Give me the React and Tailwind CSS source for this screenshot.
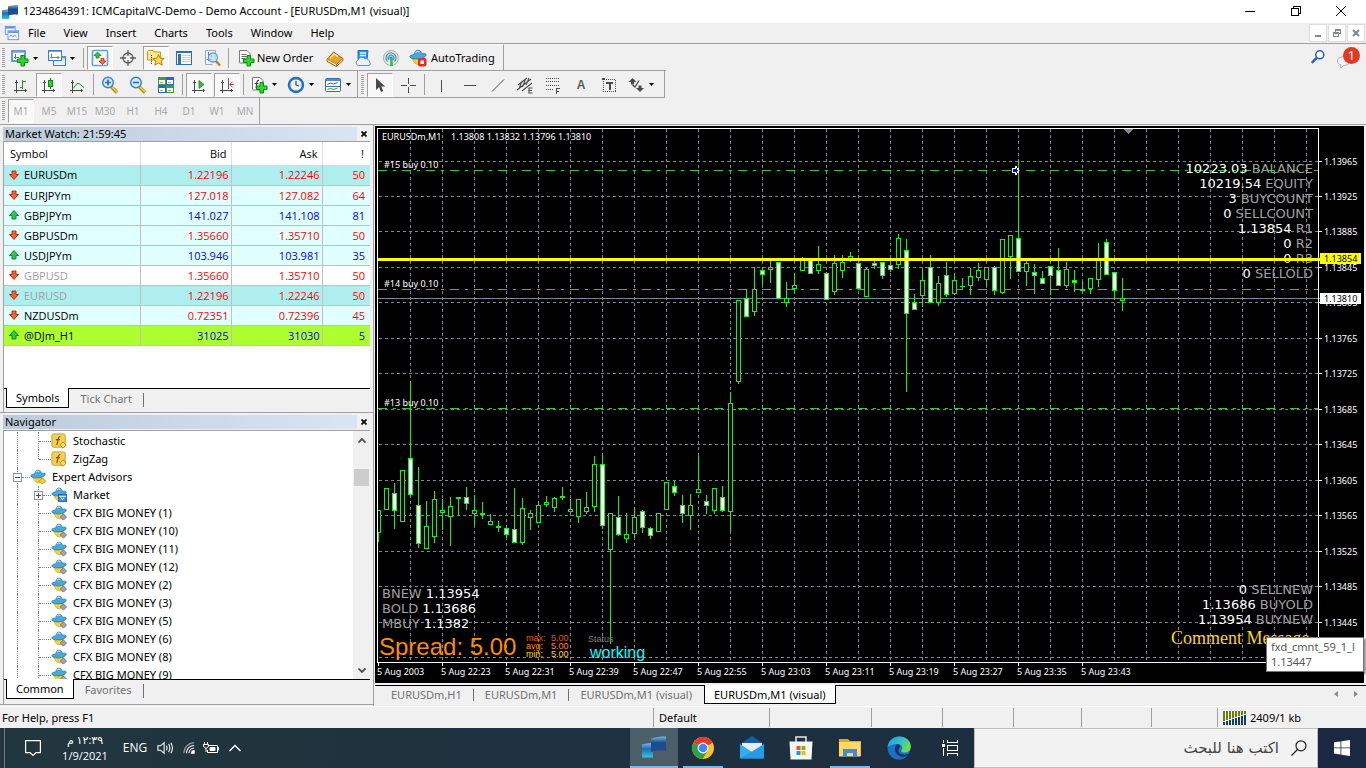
import React from 'react';

/* ---------- chart data: [high, low, bodyTop, bodyBottom, filled] ---------- */
const CANDLES = [
  [510, 541, 510, 532, 0], [488, 509, 488, 509, 0], [483, 528, 493, 510, 1], [470, 521, 470, 521, 0],
  [381, 496, 458, 494, 1], [467, 547, 505, 543, 1], [501, 548, 526, 548, 0], [491, 542, 499, 536, 0],
  [499, 529, 510, 512, 0], [497, 545, 506, 516, 0], [497, 515, 497, 498, 0], [487, 509, 497, 503, 1],
  [495, 524, 510, 513, 0], [502, 518, 513, 514, 0], [514, 524, 521, 524, 0], [521, 531, 526, 527, 0],
  [527, 537, 528, 534, 1], [488, 542, 529, 542, 1], [498, 544, 508, 542, 0], [510, 529, 513, 517, 0],
  [503, 522, 505, 522, 0], [496, 506, 502, 504, 0], [497, 511, 498, 507, 0], [487, 499, 496, 497, 0],
  [499, 512, 509, 511, 0], [499, 522, 499, 516, 0], [492, 513, 507, 511, 0], [456, 511, 464, 506, 0],
  [455, 528, 464, 525, 1], [513, 643, 513, 549, 0], [496, 535, 517, 534, 1], [513, 542, 534, 538, 0],
  [507, 536, 517, 533, 0], [510, 532, 511, 527, 1], [527, 538, 528, 535, 1], [513, 531, 513, 531, 0],
  [482, 509, 482, 509, 0], [480, 495, 486, 492, 1], [495, 522, 505, 513, 1], [494, 529, 505, 515, 0],
  [456, 492, 489, 492, 0], [495, 513, 501, 505, 1], [488, 513, 488, 510, 0], [486, 511, 497, 510, 1],
  [392, 531, 403, 511, 0], [300, 383, 300, 381, 0], [289, 316, 298, 316, 1], [267, 315, 289, 311, 0],
  [267, 284, 270, 274, 1], [260, 282, 267, 269, 0], [262, 298, 262, 298, 1], [282, 306, 298, 302, 0],
  [273, 292, 285, 288, 0], [257, 270, 259, 270, 0], [260, 273, 260, 273, 1], [246, 273, 264, 270, 0],
  [272, 299, 273, 299, 1], [255, 294, 263, 291, 0], [255, 277, 262, 270, 0], [252, 261, 256, 258, 0],
  [260, 288, 263, 288, 1], [267, 296, 269, 296, 0], [261, 268, 263, 265, 1], [262, 278, 262, 275, 1],
  [262, 271, 265, 269, 1], [234, 268, 238, 264, 0], [239, 391, 250, 313, 1], [294, 309, 302, 309, 1],
  [270, 306, 280, 295, 0], [255, 302, 267, 302, 1], [276, 305, 283, 302, 0], [262, 296, 275, 294, 1],
  [273, 294, 280, 293, 0], [278, 289, 286, 286, 0], [268, 294, 276, 285, 0], [263, 280, 270, 277, 0],
  [267, 285, 267, 279, 0], [266, 294, 267, 290, 1], [239, 293, 239, 292, 0], [235, 278, 235, 256, 0],
  [160, 271, 238, 271, 1], [260, 285, 263, 271, 0], [264, 293, 272, 275, 1], [271, 283, 278, 283, 1],
  [266, 294, 266, 275, 1], [248, 285, 270, 285, 1], [262, 287, 269, 285, 0], [270, 291, 280, 282, 1],
  [281, 290, 289, 290, 0], [278, 293, 278, 288, 0], [243, 286, 259, 279, 0], [239, 274, 242, 274, 1],
  [272, 299, 272, 290, 1], [278, 310, 298, 300, 0],
];
const GRID_Y = [161, 196, 231, 267, 302, 338, 373, 409, 444, 480, 515, 551, 586, 622, 657];
const PRICES = ['1.13965', '1.13925', '1.13885', '1.13845', '1.13805', '1.13765', '1.13725', '1.13685', '1.13645', '1.13605', '1.13565', '1.13525', '1.13485', '1.13445'];
const TIMES = ['5 Aug 2003', '5 Aug 22:23', '5 Aug 22:31', '5 Aug 22:39', '5 Aug 22:47', '5 Aug 22:55', '5 Aug 23:03', '5 Aug 23:11', '5 Aug 23:19', '5 Aug 23:27', '5 Aug 23:35', '5 Aug 23:43'];
const ORDERS = [[170, '#15 buy 0.10'], [289, '#14 buy 0.10'], [408, '#13 buy 0.10']];
const STATS_TOP = [['10223.03', 'BALANCE'], ['10219.54', 'EQUITY'], ['3', 'BUYCOUNT'], ['0', 'SELLCOUNT'], ['1.13854', 'R1'], ['0', 'R2'], ['0', 'R3'], ['0', 'SELLOLD']];
const STATS_BOTTOM = [['0', 'SELLNEW'], ['1.13686', 'BUYOLD'], ['1.13954', 'BUYNEW']];
const STATS_LEFT = [['BNEW', '1.13954'], ['BOLD', '1.13686'], ['MBUY', '1.1382']];
const SPREADS = [['max:', '5.00', '#ff4500', 641], ['avg:', '5.00', '#ff8c00', 649], ['min:', '5.00', '#ffd700', 657]];

const UI = "font-['Noto_Sans','Open_Sans',sans-serif]";
const VERD = "font-['DejaVu_Sans',sans-serif] text-[13px]";
const ARIAL = "font-['Liberation_Sans',sans-serif]";

function Stat({ y, value, label }) {
  return (
    <text x="1313" y={y} textAnchor="end" className={VERD} fill="#fff">
      {value} <tspan fill="#a0a0a0">{label}</tspan>
    </text>
  );
}

function Chart() {
  const cols = Array.from({ length: 29 }, (_, i) => 410 + i * 32);
  return (
    <svg viewBox="375 126 989 557" className={`absolute inset-0 h-full w-full ${UI} text-[9px]`} role="img" aria-label="EURUSDm M1 candlestick chart">
      <g shapeRendering="crispEdges" stroke="#778899" strokeDasharray="3 3">
        {cols.map((x) => <path key={x} d={`M${x + 0.5} 129V662`} />)}
        {GRID_Y.map((y) => <path key={y} d={`M379 ${y + 0.5}H1318`} />)}
      </g>
      <g shapeRendering="crispEdges">
        {ORDERS.map(([y]) => <path key={y} d={`M378 ${y + 0.5}H1318`} stroke="#32cd32" strokeDasharray="9 6 3 6" />)}
        <path d="M378 298.5H1321" stroke="#778899" />
        <clipPath id="plot"><rect x="378" y="129" width="940" height="533" /></clipPath>
        <g clipPath="url(#plot)" stroke="#00ff00">
          {CANDLES.map(([h, l, t, b, f], i) => {
            const x = 378 + i * 8;
            return (
              <g key={x}>
                <path d={`M${x + 0.5} ${h}V${l + 1}`} />
                {b - t < 2
                  ? <rect x={x - 2} y={t} width="5" height={b - t + 1} fill="#00ff00" stroke="none" />
                  : <rect x={x - 1.5} y={t + 0.5} width="4" height={b - t} fill={f ? '#fff' : '#000'} />}
              </g>
            );
          })}
        </g>
        <path d="M1124 129h9l-4.500 5z" fill="#778899" />
        <path d="M1012 168h3v-2h2v2h2v5h-2v2h-2v-2h-3z" fill="#fff" />
        <path d="M1013 169h3v-1h1v2h1v1h-1v2h-1v-1h-3z" fill="#00f" />
      </g>
      <g fill="#fff">
        <text x="382" y="140">EURUSDm,M1</text>
        <text x="451" y="140">1.13808 1.13832 1.13796 1.13810</text>
        {ORDERS.map(([y, label]) => <text key={y} x="384" y={y - 2}>{label}</text>)}
        {PRICES.map((p, i) => <text key={p} x="1324" y={GRID_Y[i] + 4}>{p}</text>)}
        {TIMES.map((t, i) => <text key={t} x={377 + i * 64} y="675">{t}</text>)}
      </g>
      {STATS_TOP.map(([v, l], i) => <Stat key={l} y={173 + i * 15} value={v} label={l} />)}
      {STATS_BOTTOM.map(([v, l], i) => <Stat key={l} y={594 + i * 15} value={v} label={l} />)}
      {STATS_LEFT.map(([l, v], i) => (
        <text key={l} x="382" y={598 + i * 15} className={VERD} fill="#a0a0a0">{l} <tspan fill="#fff">{v}</tspan></text>
      ))}
      <g className={ARIAL}>
        <text x="379" y="655" className="text-[24px]" fill="#ff8c00">Spread: 5.00</text>
        {SPREADS.map(([l, v, c, y]) => (
          <g key={l} fill={c} className="text-[9px]"><text x="526" y={y}>{l}</text><text x="551" y={y}>{v}</text></g>
        ))}
        <text x="588" y="642" className="text-[9px]" fill="#808080">Status</text>
        <text x="590" y="658" className="text-[16px]" fill="#00ffff">working</text>
      </g>
      <text x="1171" y="644" className="font-['Liberation_Serif',serif] text-[18px]" fill="#ffd700">Comment Message</text>
      <g shapeRendering="crispEdges">
        <rect x="378" y="258" width="942" height="3" fill="#ff0" />
        <path d="M377.500 662V128.500H1318.500V662.500H377" fill="none" stroke="#fff" />
        {GRID_Y.slice(0, 14).map((y) => <path key={y} d={`M1319 ${y + 0.5}h3`} stroke="#fff" />)}
        {TIMES.map((t, i) => <path key={t} d={`M${378.5 + i * 64} 663v3`} stroke="#fff" />)}
        <rect x="1320" y="253" width="41" height="11" fill="#ff0" />
        <rect x="1320" y="293" width="41" height="11" fill="#fff" />
      </g>
      <text x="1324" y="262" fill="#000">1.13854</text>
      <text x="1324" y="302" fill="#000">1.13810</text>
    </svg>
  );
}

/* ------------------------------- icons ------------------------------- */
function Ico({ children, s = 'h-[18px] w-[18px]', crisp }) {
  return <svg viewBox="0 0 18 18" className={`${s} shrink-0`} fill="none" shapeRendering={crisp ? 'crispEdges' : undefined} aria-hidden="true">{children}</svg>;
}
const Plus = ({ x = 6, y = 6 }) => (
  <path transform={`translate(${x} ${y})`} d="M4 .5h3.500v3.500h3.500v3.500h-3.500v3.500h-3.500v-3.500h-3.500v-3.500h3.500z" fill="#2fd62f" stroke="#0b8a17" />
);
const Axes = ({ children }) => (
  <Ico crisp>
    <path d="M4.500 4V17M2 14.500H15M3 6.500h3M13.500 13v3" stroke="#4a4a4a" />
    <g transform="translate(0 1)">{children}</g>
  </Ico>
);
const NewChartI = () => <Ico><rect x="1" y="2" width="13" height="10" fill="#fff" stroke="#3b7fc4" strokeWidth="1.500" /><path d="M2 3.500h12" stroke="#8fbdea" /><path d="M4.500 5v5M3 8.500h5M10 6v3" stroke="#5c7f9e" /><Plus /></Ico>;
const ProfilesI = () => <Ico><rect x="5.500" y="7.500" width="12" height="9" fill="#e4f0fb" stroke="#3b7fc4" /><path d="M6 8.500h11" stroke="#6aa5dd" strokeWidth="2" /><rect x=".5" y="1.500" width="13" height="10" fill="#fff" stroke="#3b7fc4" /><path d="M1 2.500h12" stroke="#6aa5dd" /><path d="M3.500 4.500v5M2.500 8.500h9M10 7v3" stroke="#5c7f9e" /></Ico>;
const WatchI = () => <Ico><rect x="1.500" y="1.500" width="15" height="15" rx="1" fill="#fff" stroke="#5ea0dc" strokeWidth="1.600" /><path d="M6.500 3l3.500 3.500H8v2.500H5V6.500H3z" fill="#2ecc40" stroke="#0b8a17" strokeWidth=".8" /><path d="M11.500 15.500L8 12h2V9.500h3V12h2z" fill="#ff6a3c" stroke="#c22e06" strokeWidth=".8" /></Ico>;
const TargetI = () => <Ico><circle cx="9" cy="9" r="5" stroke="#5c5c5c" strokeWidth="1.300" /><path d="M9 1v6M9 11v6M1 9h6M11 9h6" stroke="#5c5c5c" strokeWidth="1.300" /></Ico>;
const Star = 'M11.500 5.500l1.700 3.700 4 .3-3 2.700 1 4-3.700-2.200-3.700 2.200 1-4-3-2.700 4-.3z';
const NavI = () => <Ico><path d="M.5 11V2.500l1-1H6l1.500 1.500H13.500V11z" fill="#fbe98c" stroke="#c79a1a" /><path d="M4.500 6v10" stroke="#333" strokeDasharray="1 1" /><path d={Star} fill="#ffd84a" stroke="#b8860b" /></Ico>;
const TermI = () => <Ico crisp><rect x="1.500" y="2.500" width="15" height="13" fill="#fff" stroke="#2f6fb5" /><path d="M2 3.500h14" stroke="#2f6fb5" /><path d="M4 5v10" stroke="#2f6fb5" strokeWidth="3" /><path d="M7 6.500h9M7 8.500h9M7 10.500h9M7 12.500h9" stroke="#b9d4ee" /></Ico>;
const TesterI = () => <Ico><path d="M2.500 15.500v-14h10v9M2.500 15.500h7" fill="#eef5fc" stroke="#9aaabb" /><path d="M5.500 3v9M3.500 10.500h6M8.500 4v4" stroke="#5c8fbe" /><circle cx="10" cy="8.500" r="4.500" fill="#bfe0f7" fillOpacity=".8" stroke="#6a9fce" strokeWidth="1.300" /><path d="M13 12l4 4.500" stroke="#b8860b" strokeWidth="2.400" /></Ico>;
const OrderI = () => <Ico><path d="M2.500 13.500V1.500H10l3 3V14H2.500" fill="#fff" stroke="#7a7a7a" /><path d="M4.500 5.500h5M4.500 7.500h6M4.500 9.500h4" stroke="#6a6a6a" /><Plus /></Ico>;
const BookI = () => <Ico><path d="M1 10.500L7.500 3 17 9.500 10.500 15.500z" fill="#e0a52c" stroke="#9a6a0e" /><path d="M1 10.500v2L10.500 17.500v-2M10.500 17.500L17 11.500v-2" fill="#f7e7b5" stroke="#9a6a0e" /><path d="M4 9.500L8 5l4 2.500" stroke="#ffe39a" strokeWidth="1.500" /></Ico>;
const CloudPcI = () => <Ico><path d="M4 1.500h10l-1 9H4z" fill="#2f9be8" stroke="#1a6fb8" /><path d="M6 4h6M6 6.500h6" stroke="#d6efff" strokeWidth="1.500" /><path d="M4 16.500a3 3 0 010-5.500 4 4 0 017-1 3.300 3.300 0 014.500 3 2 2 0 01-.5 3.500z" fill="#e9f0f8" stroke="#6f8fb3" /></Ico>;
const SignalI = () => <Ico><circle cx="9" cy="9" r="7.500" fill="#dfeede" stroke="#9fb8a8" /><path d="M5.500 12.500a5 5 0 117 0M7 11a2.800 2.800 0 114 0" stroke="#4f93c8" strokeWidth="1.300" /><circle cx="9" cy="9" r="1.600" fill="#2f7fc0" /><path d="M9.500 9v8" stroke="#39b54a" strokeWidth="2.500" /></Ico>;
const Hat = ({ s, badge }) => (
  <Ico s={s}>
    <path d="M3.500 8.500c0 4.500 4 7.500 6.500 7 2.500-.3 3.500-3.500 4-7z" fill="#f4cf3e" stroke="#c79a1a" strokeWidth=".7" />
    <path d="M.8 7.500C2 5.500 5 6 5.500 5c.6-3 1.500-3.700 3.500-3.700S12 2 12.500 4.500c1.500.6 4-.4 4.700 1-.6 3-4.500 4.500-9 4.500C4 10 1 9.300.8 7.500z" fill="#4ba7dc" stroke="#1f6f9f" strokeWidth=".8" />
    <path d="M6.500 3.500c1-1.300 3-1.300 4-.5" stroke="#a8ddf6" strokeWidth="1.300" />
    {badge === 'stop' && <><rect x="9" y="9" width="8.500" height="8.500" rx="2" fill="#e0301e" /><rect x="11.500" y="11.500" width="3.500" height="3.500" fill="#fff" /></>}
    {badge === 'gray' && <path d="M14 10l3.500 3.500L14 17l-3.500-3.500z" fill="#a6a6a6" stroke="#6d6d6d" />}
    {badge === 'gold' && <path d="M14 10l3.500 3.500L14 17l-3.500-3.500z" fill="#f7cf3a" stroke="#b8860b" />}
    {badge === 'bag' && <><rect x="8.500" y="8.500" width="9" height="8" fill="#3f8fe0" stroke="#1d5fb0" /><path d="M9 10.500h8M11.500 12l1.500 2.500 1.500-2.500" stroke="#fff" /></>}
  </Ico>
);
const BarsI = () => <Axes><path d="M10.500 3v9M8 10.500h2M11 4.500h3" stroke="#1f9a30" /></Axes>;
const CandleI = () => <Axes><path d="M10.500 1v11" stroke="#0b8a17" /><rect x="8.500" y="3.500" width="4" height="6" fill="#2fd62f" stroke="#0b8a17" /></Axes>;
const LineI = () => <Axes><path d="M5 11.500l4-5h2l5 4" stroke="#1f9a30" shapeRendering="auto" /></Axes>;
const ZoomI = ({ plus }) => <Ico><path d="M10.500 11l5.500 5.500" stroke="#b8860b" strokeWidth="3.400" /><path d="M11 11l5 5" stroke="#f7cf3a" strokeWidth="1.600" /><circle cx="7" cy="6.500" r="5.300" fill="#cfe9fb" stroke="#3b7fc4" strokeWidth="1.400" /><path d={plus ? 'M4 6.500h6M7 3.500v6' : 'M4 6.500h6'} stroke="#2f6fb5" strokeWidth="1.700" /></Ico>;
const TileI = () => (
  <Ico crisp>
    <rect x="1" y="1" width="8" height="8" fill="#3fa02f" /><rect x="9" y="1" width="8" height="8" fill="#2f62d8" /><rect x="1" y="9" width="8" height="8" fill="#2f62d8" /><rect x="9" y="9" width="8" height="8" fill="#3fa02f" />
    <path d="M2 4h6v4h-6zM10 4h6v4h-6zM2 12h6v4h-6zM10 12h6v4h-6z" fill="#fff" />
    <path d="M3 6.500h3M11 6.500h3M3 14.500h3M11 14.500h3" stroke="#8fae8a" />
  </Ico>
);
const ScrollI = () => <Axes><path d="M9 3.500l5 4-5 4z" fill="#2fbf3a" stroke="#0b8a17" strokeWidth=".7" shapeRendering="auto" /></Axes>;
const ShiftI = () => <Axes><path d="M10.500 1v11" stroke="#2f6fb5" /><path d="M16 7.500h-4M14.500 5l-3 2.500 3 2.500" stroke="#d0401e" shapeRendering="auto" /></Axes>;
const IndI = () => <Ico><path d="M2.500 13.500V1.500H10l3 3V14H2.500" fill="#fff" stroke="#7a7a7a" /><path d="M9 4.500c-3-.5-2 4-3 7.500M4.500 7.500h4" stroke="#444" strokeWidth="1.200" /><Plus /></Ico>;
const ClockI = () => <Ico><circle cx="9" cy="9" r="7" fill="#eef6fd" stroke="#1f6fc4" strokeWidth="2.400" /><path d="M9 5v4l3 1" stroke="#444" strokeWidth="1.200" /><path d="M9 3.500v1M9 13.500v1M3.500 9h1M13.500 9h1" stroke="#777" /></Ico>;
const TmplI = () => <Ico><rect x="1.500" y="2.500" width="15" height="13" rx="1" fill="#fff" stroke="#2f6fb5" /><path d="M2 4h14" stroke="#4a90cf" strokeWidth="2" /><path d="M2 10.500h14" stroke="#2f6fb5" /><path d="M3.500 8.500l3-1.500 3 1 4-1.500" stroke="#b03a1e" /><path d="M3.500 13.500l3-1 3 1 4-1.500" stroke="#1f9a30" /></Ico>;
const CursorI = () => <Ico><path d="M5 2v12l3-2.800 2 4.800 2.300-1-2-4.500h4z" fill="#4a4a4a" /></Ico>;
const CrossI = () => <Ico crisp><path d="M9.500 2v6M9.500 11v6M2 9.500h6M11 9.500h6" stroke="#4a4a4a" /></Ico>;
const VI = () => <Ico crisp><path d="M9.500 4v12" stroke="#4a4a4a" /></Ico>;
const HI = () => <Ico crisp><path d="M4 9.500h12" stroke="#4a4a4a" /></Ico>;
const TI = () => <Ico><path d="M4 15.500L16 3.500" stroke="#4a4a4a" /></Ico>;
const ChanI = () => <Ico><path d="M1 14L15 3M2 9L11 2M6 15l10-8M3 13l3-8M6.500 11l3-8M10 9l3-7" stroke="#4a4a4a" strokeWidth="1.100" /><path d="M12.500 12h4M12.500 14.500h3.500M12.500 17h4M13 12v5" stroke="#4a4a4a" /></Ico>;
const FiboI = () => <Ico crisp><path d="M2 2.500h14M2 5.500h14M2 9.500h14M2 13.500h8" stroke="#4a4a4a" strokeDasharray="1 1" /><path d="M12.500 12v6M12 12.500h4M12 15.500h3" stroke="#4a4a4a" /></Ico>;
const LabelI = () => <Ico crisp><rect x="3.500" y="3.500" width="12" height="12" stroke="#4a4a4a" strokeDasharray="1 1" /><path d="M6 7h7M9.500 6v8" stroke="#4a4a4a" strokeWidth="2" /><path d="M2 2h3v2h-3z" fill="#4a4a4a" /></Ico>;
const ArrowsI = () => <Ico><path d="M5.500 2L9.500 6H7v2.500H4V6H1.500z" fill="#4a4a4a" /><path d="M12 4.500L8 11 5.500 9" stroke="#4a4a4a" strokeWidth="1.300" /><path d="M13 16l4-4h-2.500V9.500h-3V12H9z" fill="#4a4a4a" /></Ico>;
const Caret = () => <svg viewBox="0 0 5 3" className="h-[3px] w-[5px] shrink-0" aria-hidden="true"><path d="M0 0h5L2.500 3z" fill="#000" /></svg>;

/* ------------------------------ toolbar ------------------------------ */
const PRESSED = 'border border-[#a0a0a0] border-r-white border-b-white bg-[#f8f8f8]';
function Tool({ icon, label, on, drop }) {
  if (drop) {
    return <button aria-label={label} className="flex h-full w-[37px] shrink-0 items-center gap-1 pl-1">{icon}<Caret /></button>;
  }
  return (
    <button aria-label={label} aria-pressed={on ? true : undefined} className="flex h-full w-7 shrink-0 items-center justify-center">
      <span className={`flex h-6 w-[26px] items-center justify-center ${on ? PRESSED : ''}`}>{icon}</span>
    </button>
  );
}
const Grip = () => (
  <span className="flex w-[7px] shrink-0 items-center pl-0.5"><svg viewBox="0 0 4 20" className="h-5 w-1" shapeRendering="crispEdges" aria-hidden="true"><path d="M1.500 0v20" stroke="#a0a0a0" strokeWidth="3" strokeDasharray="1 1" /></svg></span>
);
const Sep = () => <span className="flex w-[5px] shrink-0 justify-center py-0.5"><span className="w-px bg-[#a0a0a0]" /></span>;

function Toolbars() {
  return (
    <div className="shrink-0 border-t border-b border-[#a0a0a0]">
      <div className="flex h-[27px] w-[666px] border-b border-[#a0a0a0]">
        <div className="flex w-[504px] border-t border-r border-t-white border-r-[#a0a0a0] pt-px">
          <Grip />
          <Tool drop icon={<NewChartI />} label="New chart" /><Tool drop icon={<ProfilesI />} label="Profiles" />
          <Sep />
          <Tool on icon={<WatchI />} label="Market Watch" /><Tool icon={<TargetI />} label="Data Window" /><Tool on icon={<NavI />} label="Navigator" /><Tool icon={<TermI />} label="Terminal" /><Tool icon={<TesterI />} label="Strategy Tester" />
          <Sep />
          <button className="flex w-[90px] items-center gap-0.5 pl-1.5 text-[11px]"><OrderI />New Order</button>
          <Tool icon={<BookI />} label="MetaEditor" /><Tool icon={<CloudPcI />} label="VPS" /><Tool icon={<SignalI />} label="Signals" />
          <button className="flex flex-1 items-center gap-1 pl-1 text-[11px]"><Hat badge="stop" />AutoTrading</button>
        </div>
      </div>
      <div className="flex">
        <div className="flex h-[27px] w-[665px] border-r border-b border-[#a0a0a0] pt-px">
          <Grip />
          <Tool icon={<BarsI />} label="Bar Chart" /><Tool on icon={<CandleI />} label="Candlesticks" /><Tool icon={<LineI />} label="Line Chart" />
          <Sep />
          <Tool icon={<ZoomI plus />} label="Zoom In" /><Tool icon={<ZoomI />} label="Zoom Out" /><Tool icon={<TileI />} label="Tile Windows" />
          <Sep />
          <Tool on icon={<ScrollI />} label="Auto Scroll" /><Tool on icon={<ShiftI />} label="Chart Shift" />
          <Sep />
          <Tool drop icon={<IndI />} label="Indicators" /><Tool drop icon={<ClockI />} label="Periods" /><Tool drop icon={<TmplI />} label="Templates" />
          <span className="-mt-px mr-px w-px shrink-0 bg-[#a0a0a0]" />
          <Grip />
          <Tool on icon={<CursorI />} label="Cursor" /><Tool icon={<CrossI />} label="Crosshair" />
          <Sep />
          <Tool icon={<VI />} label="Vertical Line" /><Tool icon={<HI />} label="Horizontal Line" /><Tool icon={<TI />} label="Trendline" /><Tool icon={<ChanI />} label="Channel" /><Tool icon={<FiboI />} label="Fibonacci" />
          <button className={`w-7 shrink-0 text-[12px] font-bold text-[#5a5a5a] ${ARIAL}`}>A</button>
          <Tool icon={<LabelI />} label="Text Label" /><Tool drop icon={<ArrowsI />} label="Arrows" />
        </div>
      </div>
      <div className="flex h-[26px] w-[260px] border-r border-[#a0a0a0] text-[10px] text-[#a8a8a8]">
        <Grip />
        {['M1', 'M5', 'M15', 'M30', 'H1', 'H4', 'D1', 'W1', 'MN'].map((t) => (
          <button key={t} className="flex h-full w-7 shrink-0 items-center justify-center">
            <span className={`flex h-6 w-[26px] items-center justify-center pt-px ${t === 'M1' ? PRESSED : ''}`}>{t}</span>
          </button>
        ))}
      </div>
    </div>
  );
}

/* ----------------------------- left panels ----------------------------- */
const RED = 'text-[#ff0000]', BLUE = 'text-[#0000ff]';
const MIST = 'bg-[#e0ffff]', AQUA = 'bg-[#afeeee]';
const ROWS = [
  ['EURUSDm', '1.22196', '1.22246', '50', 0, AQUA, 'text-black'],
  ['EURJPYm', '127.018', '127.082', '64', 0, MIST, 'text-black'],
  ['GBPJPYm', '141.027', '141.108', '81', 1, MIST, 'text-black'],
  ['GBPUSDm', '1.35660', '1.35710', '50', 0, MIST, 'text-black'],
  ['USDJPYm', '103.946', '103.981', '35', 1, MIST, 'text-black'],
  ['GBPUSD', '1.35660', '1.35710', '50', 0, 'bg-white', 'text-[#a0a0a0]'],
  ['EURUSD', '1.22196', '1.22246', '50', 0, AQUA, 'text-[#a0a0a0]'],
  ['NZDUSDm', '0.72351', '0.72396', '45', 0, MIST, 'text-black'],
  ['@DJm_H1', '31025', '31030', '5', 1, 'bg-[#adff2f]', 'text-black'],
];
function PanelTitle({ children }) {
  return (
    <div className="flex h-[14px] shrink-0 items-center text-[11px] leading-[14px]">
      <h2 className="flex-1 bg-linear-to-r from-[#bccbdb] to-[#d8e5f3] pl-0.5">{children}</h2>
      <button aria-label="Close panel" className="flex w-[13px] items-center justify-center"><svg viewBox="0 0 6 6" className="h-1.5 w-1.5"><path d="M.5.5l5 5M5.500.5l-5 5" stroke="#000" strokeWidth="1.600" /></svg></button>
    </div>
  );
}
function PanelTabs({ active, other, h }) {
  return (
    <div className={`flex ${h} shrink-0 border-t border-black bg-[#f0f0f0] text-[11px] leading-[17px]`}>
      <button className="-mt-px ml-0.5 h-5 border border-t-0 border-black bg-white px-[9px]">{active}</button>
      <button className="h-[18px] px-[11px] text-[#707070]">{other}</button>
      <span className="mt-1 h-3.5 w-px bg-[#707070]" />
    </div>
  );
}
const Dir = ({ up }) => (
  <svg viewBox="0 0 10 10" className="h-2.5 w-2.5 shrink-0" aria-hidden="true">
    <path d={up ? 'M5 .5L9.500 5.500H7V9H3V5.500H.5z' : 'M5 9.500L9.500 4.500H7V1H3V4.500H.5z'} fill={up ? '#2fc94a' : '#f0603a'} stroke={up ? '#0b7a22' : '#a82a08'} strokeWidth=".9" />
  </svg>
);
function MarketWatch() {
  return (
    <section className="flex h-[287px] shrink-0 flex-col pt-0.5 pr-[3px] pl-[3px]">
      <PanelTitle>Market Watch: 21:59:45</PanelTitle>
      <div className="flex min-h-0 flex-1 flex-col border-t border-l border-[#a0a0a0] bg-white">
        <div className="min-h-0 flex-1">
          <table className="w-full table-fixed border-collapse font-['Open_Sans',sans-serif] text-[11px] leading-[19px]">
            <colgroup><col /><col className="w-[91px]" /><col className="w-[91px]" /><col className="w-[48px]" /></colgroup>
            <thead>
              <tr className="h-[23px] text-right">
                <th scope="col" className="border-r border-[#e0e0e0] p-0 pl-1.5 text-left font-normal">Symbol</th>
                <th scope="col" className="border-r border-[#e0e0e0] p-0 pr-1 font-normal">Bid</th>
                <th scope="col" className="border-r border-[#e0e0e0] p-0 pr-1 font-normal">Ask</th>
                <th scope="col" className="p-0 pr-1.5 font-normal">!</th>
              </tr>
            </thead>
            <tbody>
              {ROWS.map(([s, b, a, d, up, bg, tc]) => (
                <tr key={s} className={`h-5 border-b border-[#c0c0c0] text-right ${bg} ${up ? BLUE : RED}`}>
                  <td className={`border-r border-[#c0c0c0] p-0 text-left ${tc}`}><span className="flex items-center gap-[5px] pl-[5px]"><Dir up={up} />{s}</span></td>
                  <td className="border-r border-[#c0c0c0] p-0 pr-0.5">{b}</td>
                  <td className="border-r border-[#c0c0c0] p-0 pr-0.5">{a}</td>
                  <td className="p-0 pr-[5px]">{d}</td>
                </tr>
              ))}
            </tbody>
          </table>
        </div>
        <PanelTabs active="Symbols" other="Tick Chart" h="h-6" />
      </div>
    </section>
  );
}
const FnI = () => (
  <Ico s="h-4 w-4"><rect x="1" y="1" width="15" height="15" rx="2" fill="#f3cf5a" stroke="#c79a1a" /><path d="M10.500 4C7.500 3.500 8.500 8 6.500 13.500M5.500 7.500h4.500" stroke="#7a5200" strokeWidth="1.300" /><path d="M13.500 10l3.500 3.500-3.500 3.500-3.500-3.500z" fill="#ffdf55" stroke="#b8860b" /></Ico>
);
const MONEY = ['1', '10', '11', '12', '2', '3', '5', '6', '8', '9'];
const DOT_X = 'h-px border-t border-dotted border-[#808080]';
function TreeRow({ icon, children, box, level = 2, last }) {
  return (
    <li className="flex h-[18px] shrink-0 items-center text-[11px] leading-[18px]">
      <span className="flex h-full w-[14px] shrink-0 border-r border-dotted border-[#808080]" />
      {level === 2 && <span className={`w-[21px] shrink-0 border-r border-dotted border-[#808080] ${last ? 'h-[9px] self-start' : 'h-full'}`} />}
      {box
        ? <span className="z-10 -ml-[5px] flex h-[9px] w-[9px] shrink-0 items-center justify-center border border-[#919191] bg-white"><svg viewBox="0 0 5 5" className="h-[5px] w-[5px]"><path d={box === '+' ? 'M0 2.500h5M2.500 0v5' : 'M0 2.500h5'} stroke="#2b4ea0" /></svg></span>
        : null}
      <span className={`${DOT_X} shrink-0 ${box ? 'w-2' : 'w-3'}`} />
      <span className="flex items-center gap-[6px]">{icon}<a href="#item" className="whitespace-nowrap">{children}</a></span>
    </li>
  );
}
function Navigator() {
  return (
    <section className="flex min-h-0 flex-1 flex-col border-t border-[#a0a0a0] pt-0.5 pr-[3px] pl-[3px]">
      <PanelTitle>Navigator</PanelTitle>
      <div className="mt-px flex min-h-0 flex-1 flex-col border-t border-l border-[#a0a0a0] bg-white">
        <div className="flex min-h-0 flex-1">
          <ul className="flex min-w-0 flex-1 flex-col overflow-hidden pt-px">
            <TreeRow icon={<FnI />}>Stochastic</TreeRow>
            <TreeRow icon={<FnI />} last>ZigZag</TreeRow>
            <TreeRow icon={<Hat s="h-4 w-4" badge="gold" />} level={1} box="-">Expert Advisors</TreeRow>
            <TreeRow icon={<Hat s="h-4 w-4" badge="bag" />} box="+">Market</TreeRow>
            {MONEY.map((n) => <TreeRow key={n} icon={<Hat s="h-4 w-4" badge="gray" />}>CFX BIG MONEY ({n})</TreeRow>)}
          </ul>
          <div className="flex w-[17px] shrink-0 flex-col items-center bg-[#f0f0f0] py-1.5">
            <svg viewBox="0 0 8 5" className="mt-px h-[5px] w-2"><path d="M.5 4.500L4 1l3.500 3.500" fill="none" stroke="#505050" strokeWidth="1.800" /></svg>
            <span className="mt-[26px] h-[17px] w-[15px] bg-[#cdcdcd]" />
            <svg viewBox="0 0 8 5" className="mt-auto h-[5px] w-2"><path d="M.5.5L4 4 7.500.5" fill="none" stroke="#505050" strokeWidth="1.800" /></svg>
          </div>
        </div>
        <PanelTabs active="Common" other="Favorites" h="h-[25px]" />
      </div>
    </section>
  );
}

/* ------------------------------- taskbar ------------------------------- */
const Big = ({ children, s = 'h-6 w-6' }) => <svg viewBox="0 0 24 24" className={s} fill="none" aria-hidden="true">{children}</svg>;
const MtI = ({ s, id }) => (
  <Big s={s}>
    <defs>
      <linearGradient id={`${id}a`} x1="0" y1="0" x2="0" y2="1"><stop stopColor="#7db4de" /><stop offset=".4" stopColor="#134f8c" /><stop offset="1" stopColor="#2b4a92" /></linearGradient>
      <linearGradient id={`${id}b`} x1="0" y1="0" x2="0" y2="1"><stop stopColor="#7fb8e6" /><stop offset=".4" stopColor="#1b6fae" /><stop offset="1" stopColor="#35c4dd" /></linearGradient>
    </defs>
    <path d="M0 9.500c4-1 7-1.500 11-1.500v14.500H0z" fill={`url(#${id}b)`} /><path d="M9 3.500c5-1.500 10-2 15-2V16c-4-.7-9-.5-15 1z" fill={`url(#${id}a)`} />
  </Big>
);
const ChromeI = () => (
  <Big><circle cx="12" cy="12" r="11" fill="#fbc02d" /><path d="M12 12L2.500 6.500A11 11 0 0121.500 6.500z" fill="#e53935" /><path d="M21.500 6.500H12V12z" fill="#e53935" /><path d="M2.500 6.500A11 11 0 0011.500 23L16.800 14.800 12 12z" fill="#2e9e4a" /><circle cx="12" cy="12" r="5.400" fill="#fff" /><circle cx="12" cy="12" r="4.300" fill="#4285f4" /></Big>
);
const MailI = () => <Big><path d="M0 8L12 0l12 8z" fill="#0f5fae" /><path d="M2 7h20v9H2z" fill="#e8eef4" /><path d="M0 8l12 8 12-8v14.500H0z" fill="#32aef0" /><path d="M0 22.500L24 8v14.500z" fill="#1c8fe0" opacity=".6" /></Big>;
const StoreI = () => <Big><path d="M7 6V1h10v5" stroke="#e8e8e8" strokeWidth="1.500" /><path d="M.5 5.500h23l-1 18h-21z" fill="#f5f5f5" /><path d="M7.500 10h4v4h-4z" fill="#f25022" /><path d="M12.500 10h4v4h-4z" fill="#7fba00" /><path d="M7.500 15h4v4h-4z" fill="#00a4ef" /><path d="M12.500 15h4v4h-4z" fill="#ffb900" /></Big>;
const FolderI = () => <Big><path d="M1 3h9l2 2h11v15H1z" fill="#e8a21c" /><path d="M1 6h21.500v14.500H1z" fill="#ffd868" /><path d="M5 21v-8h14v8h-4v-4H9v4z" fill="#3b8ede" /></Big>;
const EdgeI = () => (
  <Big>
    <defs><linearGradient id="eg" x1="0" y1="0" x2="1" y2=".5"><stop stopColor="#1c9be0" /><stop offset=".6" stopColor="#35c1c8" /><stop offset="1" stopColor="#6ee04a" /></linearGradient></defs>
    <circle cx="12" cy="12" r="11.500" fill="#1b6fc4" />
    <path d="M.7 11C1.500 4 7 .5 12.500.5 19 .5 24 5 23.800 10.500c0 4-3 6-6 6-4 0-4-2-3-3 1.500-2-.5-5.500-4-5.500C6 8 2 10 .7 11z" fill="url(#eg)" />
    <path d="M10.500 8C7 9 6.500 19 14 20.500c4 .7 6.500-.5 7.500-1.500.5-.5 0-1.300-.6-1-5 2-10-.5-9.500-4 .2-1.500 1.500-2 1.600-3.500C13 9 12 8 10.500 8z" fill="#17375e" />
  </Big>
);
const TaskViewI = () => <svg viewBox="0 0 16 16" className="h-4 w-4" fill="none" shapeRendering="crispEdges" aria-hidden="true"><path d="M5.500 0v2.500h10V0M5.500 16v-2.500h10V16M5.500 5.500h10v5h-10zM1.500 0v3M1.500 8v8" stroke="#fff" /><path d="M0 4h3v3H0z" fill="#fff" /></svg>;

function Taskbar() {
  const apps = [
    ['MetaTrader', <MtI key="i" id="task" />, 'bg-[#4c5e69] border-b-2 border-[#76b9ed]'],
    ['Chrome', <ChromeI key="i" />, ''], ['Mail', <MailI key="i" />, ''], ['Store', <StoreI key="i" />, ''],
    ['File Explorer', <FolderI key="i" />, ''], ['Edge', <EdgeI key="i" />, ''], ['Task View', <TaskViewI key="i" />, ''],
  ];
  return (
    <footer className="flex h-10 shrink-0 items-stretch bg-linear-to-r from-[#21363d] to-[#1b2a41] font-['Open_Sans',sans-serif] text-white">
      <div className="ml-1 flex flex-1 items-center border-l border-[#6c7a80]">
        <button aria-label="Notifications" className="flex w-14 justify-center"><svg viewBox="0 0 16 16" className="h-4 w-4" fill="none" stroke="#fff" strokeWidth="1.200"><path d="M.6.6h14.800v12H11L8 15.400 5 12.600H.6z" /></svg></button>
        <button className="w-12 text-center text-[11px] leading-4"><span dir="rtl" className="block font-['Open_Sans','DejaVu_Sans',sans-serif]">١٢:٣٩ م</span><span className="block">1/9/2021</span></button>
        <button className="w-[48px] pl-1 text-[12px]">ENG</button>
        <button aria-label="Volume" className="flex w-4"><svg viewBox="0 0 18 16" className="h-4 w-4" fill="none" stroke="#fff" strokeWidth="1.200"><path d="M1 5.500h3l4-3.500v12l-4-3.500H1zM10.500 5.500c1 1.500 1 3.500 0 5M13 3.500c2 3 2 6 0 9M15.500 2c2.500 4 2.500 8 0 12" /></svg></button>
        <button aria-label="Network" className="ml-2.5 flex w-3.5"><svg viewBox="0 0 14 14" className="h-3 w-3" fill="none" stroke="#fff" strokeWidth="1.200"><path d="M1 13A12 12 0 0113 1" stroke="#9aa7ac" /><path d="M4 13a9 9 0 019-9M7 13a6 6 0 016-6" /><path d="M10 13a3 3 0 013-3v3z" fill="#fff" /></svg></button>
        <button aria-label="Battery" className="ml-1.5 flex w-4"><svg viewBox="0 0 16 12" className="h-3 w-4" fill="none" stroke="#fff"><path d="M5 3.500h9.500v7H4.500V8M14.500 5.500h1v3" /><path d="M1.500 0v2M4.500 0v2M.5 2.500h5v2l-2 1.500h-1L.5 4.500zM3 6v4" /><path d="M7 5.500h5v3H7z" fill="#fff" /></svg></button>
        <button aria-label="Show hidden icons" className="ml-2.5 flex w-3"><svg viewBox="0 0 12 7" className="h-2 w-3" fill="none" stroke="#fff" strokeWidth="1.300"><path d="M.5 6.500L6 1l5.500 5.500" /></svg></button>
      </div>
      <nav className="flex shrink-0 items-stretch">
        {apps.map(([n, icon, c], i) => (
          <button key={n} aria-label={n} className={`relative flex items-center justify-center ${i === 0 ? 'w-12' : i === 6 ? 'w-[51px] pl-0.5' : 'w-[49px]'} ${c}`}>
            {icon}
            {(n === 'Chrome' || n === 'File Explorer') && <span className="absolute bottom-0 h-0.5 w-10 bg-[#76b9ed]" />}
          </button>
        ))}
      </nav>
      <label className="flex w-[344px] shrink-0 items-center gap-2 border border-[#c0c0c0] bg-[#f2f2f2] pr-2.5">
        <span className="sr-only">بحث</span>
        <input dir="rtl" placeholder="اكتب هنا للبحث" className="min-w-0 flex-1 bg-transparent px-1 font-['DejaVu_Sans',sans-serif] text-[15px] outline-none placeholder:text-[#454545]" />
        <svg viewBox="0 0 16 16" className="h-4 w-4" fill="none" stroke="#222" strokeWidth="1.200"><circle cx="10" cy="5.800" r="5" /><path d="M6.500 9.500L.5 15.500" /></svg>
      </label>
      <button aria-label="Start" className="flex w-12 shrink-0 items-center justify-center bg-[#1a2842]"><svg viewBox="0 0 16 16" className="h-4 w-4" fill="#fff"><path d="M0 2.300l6.500-.9v6.100H0zM7.300 1.300L16 0v7.500H7.300zM0 8.300h6.500v6.200L0 13.600zM7.300 8.300H16V16l-8.700-1.300z" /></svg></button>
    </footer>
  );
}

/* -------------------------------- app -------------------------------- */
const CHART_TABS = ['EURUSDm,H1', 'EURUSDm,M1', 'EURUSDm,M1 (visual)'];
const CELLS = ['w-[102px]', 'w-[71px]', 'w-[71px]', 'w-[68px]', 'w-[70px]', 'w-[66px]'];

export default function App() {
  return (
    <div className={`flex h-screen flex-col overflow-hidden bg-[#f0f0f0] text-black ${UI}`}>
      <header className="flex h-[23px] shrink-0 items-center bg-white">
        <span className="ml-0.5"><MtI s="h-4 w-4" id="title" /></span>
        <h1 className="ml-[5px] text-[11px]">1234864391: ICMCapitalVC-Demo - Demo Account - [EURUSDm,M1 (visual)]</h1>
        <div className="-mt-0.5 ml-auto flex pr-px">
          <button aria-label="Minimize" className="flex w-[46px] items-center justify-center"><svg viewBox="0 0 10 10" className="h-2.5 w-2.5" shapeRendering="crispEdges"><path d="M0 5.500h10" stroke="#000" /></svg></button>
          <button aria-label="Restore" className="flex w-[46px] items-center justify-center"><svg viewBox="0 0 10 10" className="h-2.5 w-2.5" fill="none" stroke="#000" shapeRendering="crispEdges"><path d="M.5 2.500h7v7h-7zM2.500 2V.5h7v7H8" /></svg></button>
          <button aria-label="Close" className="flex w-[46px] items-center justify-center pr-0.5"><svg viewBox="0 0 10 10" className="h-2.5 w-2.5" stroke="#000"><path d="M0 0l10 10M10 0L0 10" /></svg></button>
        </div>
      </header>

      <nav className="flex h-5 shrink-0 items-center text-[11px]">
        <span className="ml-1 mr-2 w-4"><Ico s="h-4 w-4"><rect x="1.500" y="1.500" width="11" height="9" fill="#fff" stroke="#5b93dd" /><path d="M2 3h10" stroke="#5b93dd" strokeWidth="2" /><rect x="4.500" y="6.500" width="12" height="10" fill="#fff" stroke="#5b93dd" /><path d="M5 8h11" stroke="#5b93dd" strokeWidth="2" /><path d="M6 14l2-3 2 3 2-3 2 3" stroke="#5b93dd" /></Ico></span>
        <div className="flex gap-[18px]">
          {['File', 'View', 'Insert', 'Charts', 'Tools', 'Window', 'Help'].map((m) => <button key={m}>{m}</button>)}
        </div>
        <div className="ml-auto flex gap-px pr-px">
          <button aria-label="Minimize chart" className="flex h-[18px] w-[18px] items-end justify-center border border-[#dcdcdc] bg-white pb-1"><span className="h-0.5 w-1.5 bg-[#7a8aa0]" /></button>
          <button aria-label="Restore chart" className="flex h-[18px] w-[18px] items-center justify-center border border-[#dcdcdc] bg-white"><svg viewBox="0 0 8 8" className="h-2 w-2" fill="none" stroke="#7a8aa0" shapeRendering="crispEdges"><path d="M.5 3.500h5v4h-5zM0 4h6M2.500 3V.5h5v4H6M2 1h6" /></svg></button>
          <button aria-label="Close chart" className="flex h-[18px] w-[18px] items-center justify-center border border-[#dcdcdc] bg-white"><svg viewBox="0 0 8 8" className="h-2 w-2" stroke="#7a8aa0" strokeWidth="2"><path d="M1 1l6 6M7 1L1 7" /></svg></button>
        </div>
      </nav>

      <div className="relative shrink-0">
        <Toolbars />
        <div className="absolute top-1 right-1.5 flex items-center gap-2.5">
          <button aria-label="Search"><Ico s="h-4 w-4"><circle cx="11" cy="6.500" r="4.500" fill="#fff" stroke="#2b62c9" strokeWidth="1.800" /><path d="M7.500 10L2 15.500" stroke="#2b62c9" strokeWidth="2.800" /></Ico></button>
          <button aria-label="Messages" className="relative h-5 w-6">
            <Ico s="absolute top-1.5 left-0 h-[17px] w-[17px]"><path d="M8 4c4 0 7 2 7 4.500S12 13 8.500 13L5 16v-3.500C3 12 1.500 10.500 1.500 8.500 1.500 6 4 4 8 4z" fill="#f4f4fa" stroke="#a8a8b0" /></Ico>
            <span className="absolute top-0 right-0 flex h-[17px] w-[17px] items-center justify-center rounded-full bg-[#e23a22] text-[12px] text-white">1</span>
          </button>
        </div>
      </div>

      <main className="flex min-h-0 flex-1">
        <aside className="flex w-[374px] shrink-0 flex-col border-r border-[#a0a0a0]">
          <MarketWatch />
          <Navigator />
          <div className="h-0.5 shrink-0 border-t border-[#a0a0a0]" />
        </aside>
        <div className="flex min-w-0 flex-1 flex-col pl-px">
          <div className="relative mt-px mr-0.5 min-h-0 flex-1 bg-black">
            <Chart />
            <div className="absolute right-0 bottom-[11px] w-[98px] border border-[#767676] bg-white px-1 pt-px pb-0.5 text-[11px] leading-[15px] text-[#575757] shadow-[2px_2px_2px_rgba(0,0,0,0.4)]">fxd_cmnt_59_1_l<br />1.13447</div>
          </div>
          <div className="mt-0.5 flex h-[21px] shrink-0 border-t border-black pl-2.5 text-[11px] leading-[17px] text-[#707070]">
            {CHART_TABS.map((t, i) => (
              <button key={t} className="flex h-[17px] items-center">
                <span className="px-1.5">{t}</span>
                {i < 2 && <span className="mx-[5px] h-3 w-px bg-[#707070]" />}
              </button>
            ))}
            <button className="-mt-px ml-1.5 h-[19px] border border-t-0 border-black bg-white px-[9px] text-black">EURUSDm,M1 (visual)</button>
            <div className="mr-2 ml-auto flex items-center gap-4 pb-1">
              <button aria-label="Scroll tabs left"><svg viewBox="0 0 4 6" className="h-1.5 w-1"><path d="M4 0v6L0 3z" fill="#8a8a8a" /></svg></button>
              <button aria-label="Scroll tabs right"><svg viewBox="0 0 4 6" className="h-1.5 w-1"><path d="M0 0v6l4-3z" fill="#8a8a8a" /></svg></button>
            </div>
          </div>
        </div>
      </main>

      <div className="flex h-[22px] shrink-0 items-stretch border-t border-white py-px text-[11px] leading-5">
        <span className="flex-1 pl-0.5">For Help, press F1</span>
        <span className="w-[116px] border-l border-[#a0a0a0] pl-[5px]">Default</span>
        {CELLS.map((w, i) => <span key={i} className={`${w} border-l border-[#a0a0a0]`} />)}
        <span className="flex w-[149px] items-center gap-[3px] border-l border-[#a0a0a0] pl-[5px]">
          <svg viewBox="0 0 24 14" className="h-3.5 w-6" shapeRendering="crispEdges" aria-hidden="true">
            {Array.from({ length: 8 }, (_, i) => <g key={i}><rect x={i * 3} y="0" width="2" height={10 - i} fill="#6b7d12" /><rect x={i * 3} y={11 - i} width="2" height={3 + i} fill="#10405c" /></g>)}
          </svg>
          2409/1 kb
        </span>
      </div>

      <Taskbar />
    </div>
  );
}
